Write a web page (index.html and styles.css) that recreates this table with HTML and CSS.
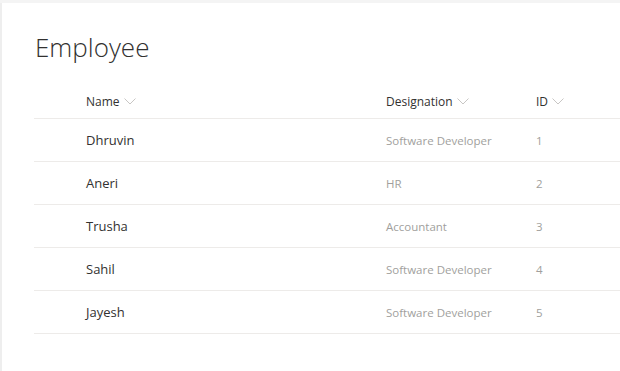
FILE: index.html
```html
<!DOCTYPE html>
<html lang="en">
<head>
  <meta charset="UTF-8">
  <meta name="viewport" content="width=device-width, initial-scale=1.0">
  <title>Employee</title>
  <link rel="stylesheet" href="styles.css">
</head>
<body>
  <div class="page">
    <h1>Employee</h1>
    <div class="list">
      <div class="row header">
        <span></span>
        <span class="col-head">Name <svg class="chevron" viewBox="0 0 12 7"><path d="M0.5 0.5 L6 6 L11.5 0.5" /></svg></span>
        <span class="col-head">Designation <svg class="chevron" viewBox="0 0 12 7"><path d="M0.5 0.5 L6 6 L11.5 0.5" /></svg></span>
        <span class="col-head">ID <svg class="chevron" viewBox="0 0 12 7"><path d="M0.5 0.5 L6 6 L11.5 0.5" /></svg></span>
      </div>
      <div class="row">
        <span></span>
        <span class="name">Dhruvin</span>
        <span class="meta">Software Developer</span>
        <span class="meta">1</span>
      </div>
      <div class="row">
        <span></span>
        <span class="name">Aneri</span>
        <span class="meta">HR</span>
        <span class="meta">2</span>
      </div>
      <div class="row">
        <span></span>
        <span class="name">Trusha</span>
        <span class="meta">Accountant</span>
        <span class="meta">3</span>
      </div>
      <div class="row">
        <span></span>
        <span class="name">Sahil</span>
        <span class="meta">Software Developer</span>
        <span class="meta">4</span>
      </div>
      <div class="row">
        <span></span>
        <span class="name">Jayesh</span>
        <span class="meta">Software Developer</span>
        <span class="meta">5</span>
      </div>
    </div>
  </div>
</body>
</html>
```

FILE: styles.css
```css
html {
  font-family: "Open Sans", "Liberation Sans", sans-serif;
}

body {
  margin: 0;
  background-color: white;
  border-top: 3px solid #f4f4f4;
}

.page {
  box-sizing: border-box;
  border-left: 2px solid #eeeeee;
  min-height: calc(100vh - 3px);
  padding-top: 26px;
}

h1 {
  margin: 0 0 0 33px;
  font-size: 26px;
  font-weight: 300;
  line-height: 36px;
  color: #323130;
}

.list {
  margin-left: 32px;
  margin-top: 19px;
}

.row {
  display: grid;
  grid-template-columns: 52px 300px 150px 1fr;
  align-items: center;
  height: 42px;
  border-bottom: 1px solid #edebe9;
}
.row.header {
  height: 34px;
}

.col-head {
  display: flex;
  align-items: center;
  gap: 4px;
  font-size: 12px;
  color: #323130;
}
.chevron {
  width: 12px;
  height: 7px;
  fill: none;
  stroke: #c8c6c4;
  stroke-width: 1;
}

.name {
  font-size: 13px;
  color: #323130;
}
.meta {
  font-size: 11.5px;
  color: #a19f9d;
}
```
